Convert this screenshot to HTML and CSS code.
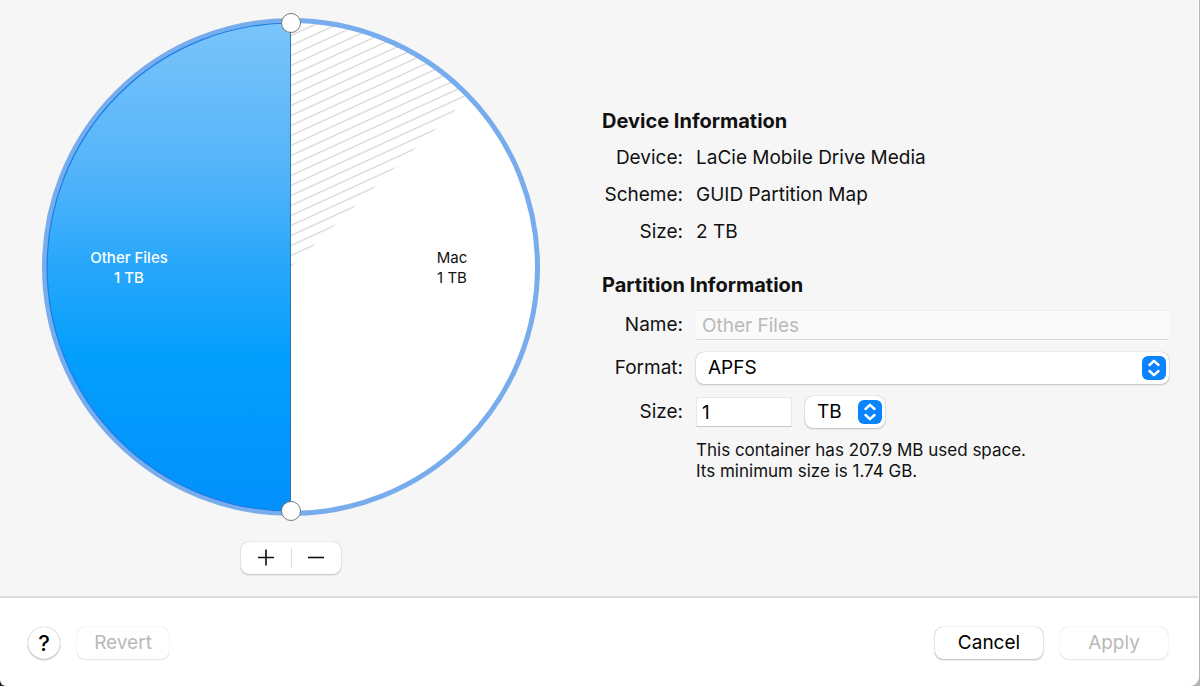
FILE: index.html
```html
<!DOCTYPE html>
<html lang="en">
<head>
<meta charset="UTF-8">
<meta name="viewport" content="width=device-width, initial-scale=1.0">
<title>Partition Device</title>
<link rel="stylesheet" href="styles.css">
</head>
<body>

<form class="window">
  <main class="content">

    <section class="chart">
      <svg class="pie" viewBox="-255 -255 510 510" role="img" aria-label="Partition map">
        <defs>
          <linearGradient id="blue" x1="0" y1="0" x2="0" y2="1">
            <stop offset="0" stop-color="#7ac4fa"/>
            <stop offset="0.3" stop-color="#54b4f9"/>
            <stop offset="0.5" stop-color="#27a7fb"/>
            <stop offset="0.68" stop-color="#049ffd"/>
            <stop offset="1" stop-color="#0290fb"/>
          </linearGradient>
          <pattern id="hatch" width="10" height="10" patternUnits="userSpaceOnUse" patternTransform="skewY(-24.6)">
            <path d="M0 8.5H10" stroke="#d2d2d2" stroke-width="1.3"/>
          </pattern>
        </defs>
        <circle r="246" fill="#fff"/>
        <!-- used space -->
        <path d="M0 0V-245A245 245 0 0 1 177 -169Z" fill="url(#hatch)"/>
        <path d="M0 -245A245 245 0 0 0 0 245Z" fill="url(#blue)"/>
        <circle r="246.5" fill="none" stroke="#77adec" stroke-width="5"/>
        <path d="M0 -244A244 244 0 0 0 0 244" fill="none" stroke="#1a7ee8" stroke-width="1.2"/>
        <path d="M-0.5 -244V244" stroke="#2c78ad"/>
        <!-- drag handles -->
        <circle class="handle" cy="-244" r="9.5"/>
        <circle class="handle" cy="244" r="9.5"/>
        <text class="slice-label white" x="-162" y="-4">Other Files</text>
        <text class="slice-label white" x="-162" y="16">1 TB</text>
        <text class="slice-label" x="161" y="-4">Mac</text>
        <text class="slice-label" x="161" y="16">1 TB</text>
      </svg>
      <div class="segment">
        <button type="button" aria-label="Add partition">
          <svg width="18" height="18" viewBox="0 0 18 18"><path d="M1 8.500H17M9 0.500V16.500"/></svg>
        </button>
        <button type="button" aria-label="Remove partition">
          <svg width="18" height="18" viewBox="0 0 18 18"><path d="M1 8.500H17"/></svg>
        </button>
      </div>
    </section>

    <section class="info">
      <h2>Device Information</h2>
      <dl class="details">
        <dt>Device:</dt><dd>LaCie Mobile Drive Media</dd>
        <dt>Scheme:</dt><dd>GUID Partition Map</dd>
        <dt>Size:</dt><dd>2 TB</dd>
      </dl>

      <h2>Partition Information</h2>
      <div class="fields">
        <label for="name">Name:</label>
        <input class="text" type="text" id="name" value="Other Files" disabled>

        <label for="format">Format:</label>
        <div class="popup">
          <select id="format">
            <option>APFS</option>
          </select>
          <svg class="arrows" viewBox="0 0 24 24"><path d="M7.500 9L12 4.800L16.500 9M7.500 15L12 19.200L16.500 15"/></svg>
        </div>

        <label for="size">Size:</label>
        <div class="size-row">
          <input class="text size" type="text" id="size" value="1">
          <div class="popup unit">
            <select id="unit" aria-label="Unit">
              <option>TB</option>
            </select>
            <svg class="arrows" viewBox="0 0 24 24"><path d="M7.500 9L12 4.800L16.500 9M7.500 15L12 19.200L16.500 15"/></svg>
          </div>
        </div>

        <p class="note">This container has 207.9 MB used space.<br>Its minimum size is 1.74 GB.</p>
      </div>
    </section>

  </main>

  <footer class="actions">
    <button type="button" class="help" aria-label="Help">?</button>
    <button type="reset" class="btn revert" disabled>Revert</button>
    <button type="button" class="btn cancel">Cancel</button>
    <button type="submit" class="btn" disabled>Apply</button>
  </footer>
</form>

</body>
</html>
```

FILE: styles.css
```css
* {
  box-sizing: border-box;
}
body {
  margin: 0;
  font-family: Inter, "Liberation Sans", sans-serif;
  font-size: 19px;
  line-height: 24px;
  color: #111;
  background: linear-gradient(to right, #222 50%, #b4b4b4 50%);
}
button, input, select {
  font: inherit;
  color: #000;
}
.window {
  display: flex;
  flex-direction: column;
  min-height: 100vh;
  margin-right: 1px;
  background: #fff;
  border-right: 1px solid #fff;
  border-radius: 0 0 9px 6px;
}
.content {
  flex: 1;
  display: flex;
  align-items: flex-start;
  gap: 56px;
  padding: 12px 29px 22px 36px;
  background: #f6f6f6;
  border-bottom: 2px solid #dcdcdc;
}

/* pie chart */
.chart {
  flex: 0 0 510px;
  display: flex;
  flex-direction: column;
  align-items: center;
  gap: 20px;
}
.pie {
  display: block;
  width: 100%;
}
.handle {
  fill: #fff;
  stroke: #777;
  stroke-width: 1;
}
.slice-label {
  font-size: 15px;
  text-anchor: middle;
  fill: #111;
}
.white {
  fill: #fff;
  font-weight: 500;
}
.segment {
  display: flex;
  height: 32px;
  background: #fff;
  border-radius: 8px;
  box-shadow: 0 0 1px rgba(0, 0, 0, 0.3), 0 1px 2px rgba(0, 0, 0, 0.2);
}
.segment button {
  display: flex;
  align-items: center;
  justify-content: center;
  width: 50px;
  padding: 0;
  border: none;
  background: linear-gradient(#ddd, #ddd) left center / 1px 20px no-repeat;
}
.segment button:first-child {
  background: none;
}
.segment path {
  fill: none;
  stroke: #111;
  stroke-width: 1.6;
}

/* right side */
.info {
  flex: 1;
  padding-top: 97px;
}
h2 {
  margin: 0;
  font-size: 20px;
  font-weight: 700;
}
.details {
  display: grid;
  grid-template-columns: 81px 1fr;
  gap: 13px;
  margin: 13px 0 29px;
}
.details dt {
  text-align: right;
}
.details dd {
  margin: 0;
}
.fields {
  display: grid;
  grid-template-columns: 81px 1fr;
  align-items: center;
  gap: 12px 13px;
  margin-top: 13px;
}
.fields label {
  text-align: right;
}
.text {
  width: 100%;
  height: 30px;
  padding: 0 5px;
  border: 1px solid #e8e8e8;
  border-bottom-color: #c8c8c8;
  background: #fff;
}
.text:disabled {
  color: #b9b9b9;
  background: #fafafa;
  border-color: #efefef #fafafa #d8d8d8;
}
.popup {
  position: relative;
  height: 32px;
}
.popup select {
  appearance: none;
  width: 100%;
  height: 32px;
  padding: 0 32px 0 12px;
  border: none;
  border-radius: 8px;
  background: #fff;
  box-shadow: 0 0 1px rgba(0, 0, 0, 0.35), 0 1px 2px rgba(0, 0, 0, 0.2);
}
.arrows {
  position: absolute;
  top: 4px;
  right: 3px;
  width: 24px;
  height: 24px;
  border-radius: 6px;
  background: #0a84fb;
  pointer-events: none;
}
.arrows path {
  fill: none;
  stroke: #fff;
  stroke-width: 2.4;
  stroke-linecap: round;
  stroke-linejoin: round;
}
.size-row {
  display: flex;
  align-items: center;
  gap: 13px;
}
.size {
  width: 96px;
}
.unit {
  width: 80px;
}
.note {
  grid-column: 2;
  margin: 0;
  font-size: 17px;
  line-height: 21px;
}

/* bottom bar */
.actions {
  display: flex;
  align-items: center;
  gap: 17px;
  padding: 29px 30px 27px 28px;
}
.help, .btn {
  height: 32px;
  padding: 0;
  border: none;
  background: #fff;
  box-shadow: 0 0 1px rgba(0, 0, 0, 0.4), 0 1px 2px rgba(0, 0, 0, 0.25);
}
.help {
  width: 32px;
  border-radius: 50%;
  font-size: 22px;
  font-weight: 500;
}
.btn {
  width: 108px;
  border-radius: 8px;
}
.btn:disabled {
  color: #b9b9b9;
  box-shadow: 0 0 1px rgba(0, 0, 0, 0.25), 0 1px 1px rgba(0, 0, 0, 0.08);
}
.revert {
  width: 92px;
}
.cancel {
  margin-left: auto;
}
```
